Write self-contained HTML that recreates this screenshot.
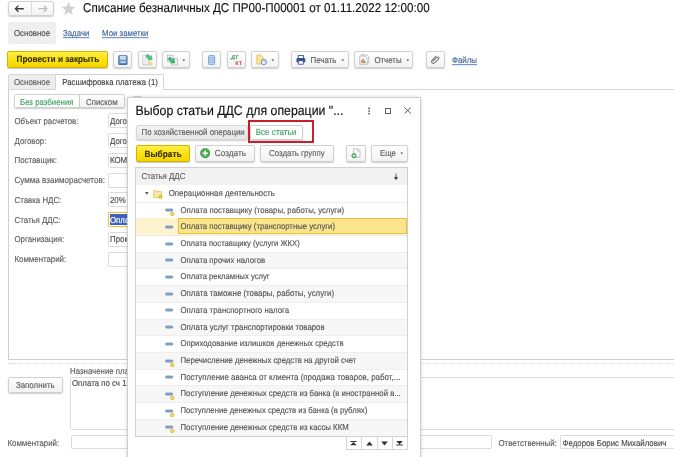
<!DOCTYPE html>
<html lang="ru">
<head>
<meta charset="utf-8">
<title>Списание безналичных ДС</title>
<style>
html,body{margin:0;padding:0;}
body{text-rendering:geometricPrecision;-webkit-font-smoothing:antialiased;width:674px;height:457px;overflow:hidden;background:#fff;position:relative;font-family:"Liberation Sans",Arial,sans-serif;font-size:7.86px;color:#606060;}
.a{position:absolute;white-space:nowrap;box-sizing:border-box;}
.t{margin-top:0.7px;position:absolute;white-space:nowrap;line-height:10px;height:10px;transform:scaleY(1.1);transform-origin:0 72%;-webkit-text-stroke:0.14px currentColor;}
.btn{position:absolute;box-sizing:border-box;border:1px solid #d0d0d0;border-radius:2px;background:linear-gradient(#ffffff,#f2f2f2);box-shadow:0 1px 1.5px rgba(0,0,0,.2);}
.ybtn{position:absolute;box-sizing:border-box;border:1px solid #d3b300;border-radius:2px;background:linear-gradient(#fff045,#fbe317 45%,#f5d500);box-shadow:0 1px 1px rgba(0,0,0,.22);font-weight:bold;color:#3a3200;}
.fld{position:absolute;box-sizing:border-box;border:1px solid #dcdcdc;border-radius:1.5px;background:#fff;}
.lnk{color:#41669f;text-decoration:underline;text-decoration-thickness:0.6px;text-underline-offset:1.1px;text-decoration-skip-ink:none;text-decoration-color:#6d8fc4;}
.row{position:absolute;left:135px;width:273px;height:16.75px;box-sizing:border-box;border-top:1px solid #eeeeee;}
.row.g{background:#f7f7f7;}
.row.sel{background:#fdf3cc;border-top:1px solid #fdf3cc;}
.rt{position:absolute;left:45.5px;top:3.0px;line-height:10px;white-space:nowrap;transform:scaleY(1.1);transform-origin:0 72%;-webkit-text-stroke:0.14px currentColor;color:#555;}
.ic{position:absolute;left:30px;top:4.6px;}
</style>
</head>
<body>
<div id="w" style="position:absolute;left:0;top:0;width:674px;height:457px;overflow:hidden;will-change:transform;">
<!-- header nav -->
<div class="btn" style="left:8px;top:1px;width:46px;height:15px;border-radius:3px;"></div>
<div class="a" style="left:31px;top:2px;width:1px;height:13px;background:#dcdcdc;"></div>
<svg class="a" style="left:14px;top:4px" width="12" height="9" viewBox="0 0 12 9"><path d="M4.4 1.6 L1.4 4.7 L4.4 7.8 M1.6 4.7 H9.8" fill="none" stroke="#3c3c3c" stroke-width="1.35"/></svg>
<svg class="a" style="left:36.5px;top:4px" width="12" height="9" viewBox="0 0 12 9"><path d="M6.9 1.6 L9.9 4.7 L6.9 7.8 M9.7 4.7 H1.6" fill="none" stroke="#bdbdbd" stroke-width="1.3"/></svg>
<svg class="a" style="left:61px;top:1px" width="15" height="15" viewBox="0 0 15 15"><path d="M7.5 0.8 L9.4 5.6 L14.4 5.9 L10.5 9.1 L11.8 14 L7.5 11.2 L3.2 14 L4.5 9.1 L0.6 5.9 L5.6 5.6 Z" fill="#d0d0d0"/></svg>
<div class="t" style="left:83px;top:1px;font-size:11.62px;line-height:14px;height:14px;color:#111;transform:scaleY(1.1);">Списание безналичных ДС ПР00-П00001 от 01.11.2022 12:00:00</div>

<!-- nav tabs -->
<div class="a" style="left:8px;top:22px;width:47.8px;height:22px;background:#efefef;border-radius:2px;"></div>
<div class="t" style="left:14px;top:28px;color:#505050;">Основное</div>
<div class="t lnk" style="left:63px;top:28px;">Задачи</div>
<div class="t lnk" style="left:102px;top:28px;">Мои заметки</div>

<!-- command bar -->
<div class="ybtn" style="left:7.3px;top:50.8px;width:100.3px;height:17.6px;"></div>
<div class="t" style="left:16.5px;top:54.1px;font-weight:bold;color:#3a3200;font-size:8.25px;">Провести и закрыть</div>
<div class="btn" style="left:113px;top:51px;width:19px;height:17px;"></div>
<div class="btn" style="left:138px;top:51px;width:19px;height:17px;"></div>
<div class="btn" style="left:162px;top:51px;width:28px;height:17px;"></div>
<div class="btn" style="left:202px;top:51px;width:19px;height:17px;"></div>
<div class="btn" style="left:227px;top:51px;width:19px;height:17px;"></div>
<div class="btn" style="left:251px;top:51px;width:28px;height:17px;"></div>
<div class="btn" style="left:291px;top:51px;width:58px;height:17px;"></div>
<div class="t" style="left:310.6px;top:55.1px;">Печать</div>
<div class="btn" style="left:354px;top:51px;width:59px;height:17px;"></div>
<div class="t" style="left:374.4px;top:55.1px;">Отчеты</div>
<div class="btn" style="left:426px;top:51px;width:19px;height:17px;"></div>
<div class="t lnk" style="left:452px;top:55.1px;">Файлы</div>


<!-- toolbar icons -->
<svg class="a" style="left:117.6px;top:54.5px" width="10" height="10.4" viewBox="0 0 10 10.4"><rect x="0.6" y="0.6" width="8.6" height="9" rx="0.7" fill="#6f97c9" stroke="#4f79ae" stroke-width="0.8"/><rect x="2" y="1.1" width="5.8" height="3.5" fill="#dbe6f4"/><path d="M2.4 2.3 H7.4 M2.4 3.5 H7.4" stroke="#aebfd6" stroke-width="0.45"/><rect x="2.4" y="6.4" width="5" height="2" fill="#cfdcec"/><rect x="1" y="8.5" width="7.8" height="1.1" fill="#34578a"/></svg>
<svg class="a" style="left:141.5px;top:53.5px" width="12" height="12" viewBox="0 0 12 12"><path d="M0.9 1.2 H5.2 L7 3 V10.8 H0.9 Z" fill="#fbfbfb" stroke="#b7bcc4" stroke-width="0.7"/><path d="M2 4.4 H4.6 M2 6 H5.4 M2 7.6 H5.4 M2 9.2 H4.6" stroke="#cfd3d9" stroke-width="0.6"/><g transform="translate(4.6,1.5) rotate(36)"><path d="M0 -1.5 H3.6 V-2.7 L6.9 0 L3.6 2.7 V1.5 H0 Z" fill="#4cc687" stroke="#2fa565" stroke-width="0.5"/></g><ellipse cx="8.1" cy="8.9" rx="1.7" ry="0.8" fill="#faeaa0" stroke="#dcbc4c" stroke-width="0.45"/><path d="M6.4 8.9 V10.4 A1.7 0.8 0 0 0 9.8 10.4 V8.9" fill="#f5de7a" stroke="#dcbc4c" stroke-width="0.45"/></svg>
<svg class="a" style="left:166px;top:53.5px" width="13" height="12" viewBox="0 0 13 12"><rect x="1.3" y="1.2" width="5.8" height="6.2" fill="#f4f5f7" stroke="#a7adb6" stroke-width="0.7"/><rect x="5.8" y="4.8" width="5.8" height="6.2" fill="#f4f5f7" stroke="#a7adb6" stroke-width="0.7"/><g transform="translate(3,4.1) rotate(40)"><path d="M0 -1.4 H4.2 V-2.7 L7.6 0 L4.2 2.7 V1.4 H0 Z" fill="#45bd78" stroke="#2c9a55" stroke-width="0.6"/></g></svg>
<svg class="a" style="left:182px;top:58.6px" width="4" height="3" viewBox="0 0 4 3"><path d="M0.4 0.5 H3.2 L1.8 2.3 Z" fill="#555"/></svg>
<svg class="a" style="left:208.4px;top:54.6px" width="7.4" height="10.4" viewBox="0 0 7.4 10.4"><rect x="0.5" y="0.5" width="6.2" height="9.2" rx="0.9" fill="#c3d8ef" stroke="#6d98c8" stroke-width="0.75"/><path d="M0.8 2.8 H6.4 M0.8 5.1 H6.4 M0.8 7.4 H6.4" stroke="#6d98c8" stroke-width="0.65"/></svg>
<svg class="a" style="left:229px;top:53px" width="16" height="13" viewBox="0 0 16 13"><text x="2" y="6.4" font-family="Liberation Sans, Arial, sans-serif" font-size="5.5" font-weight="bold" font-style="italic" fill="#2f9a48">ДТ</text><text x="6.2" y="11.6" font-family="Liberation Sans, Arial, sans-serif" font-size="5.5" font-weight="bold" fill="#d23a3a">КТ</text></svg>
<svg class="a" style="left:256px;top:53.5px" width="12" height="12" viewBox="0 0 12 12"><path d="M0.9 1 H5 L7 3 V10 H0.9 Z" fill="#f8e596" stroke="#dcbc58" stroke-width="0.7"/><circle cx="7.9" cy="8" r="2.6" fill="#fff" stroke="#4d72b6" stroke-width="0.85"/><path d="M7.9 6.5 V8 H9.1" stroke="#4d72b6" stroke-width="0.6" fill="none"/></svg>
<svg class="a" style="left:270.7px;top:58.6px" width="4" height="3" viewBox="0 0 4 3"><path d="M0.4 0.5 H3.2 L1.8 2.3 Z" fill="#555"/></svg>
<svg class="a" style="left:296px;top:54.5px" width="10" height="10" viewBox="0 0 10 10"><rect x="2.2" y="0.6" width="5.2" height="3" fill="#fff" stroke="#31518a" stroke-width="0.9"/><rect x="0.5" y="3.2" width="8.8" height="4.2" rx="1" fill="#31518a"/><rect x="2.3" y="5.8" width="5" height="3.4" fill="#fff" stroke="#31518a" stroke-width="0.8"/></svg>
<svg class="a" style="left:341px;top:58.6px" width="4" height="3" viewBox="0 0 4 3"><path d="M0.4 0.5 H3.2 L1.8 2.3 Z" fill="#555"/></svg>
<svg class="a" style="left:358.5px;top:54px" width="11" height="11" viewBox="0 0 11 11"><path d="M2.6 0.7 H7.6 L9.8 2.9 V9 H2.6 Z" fill="#fafafa" stroke="#a4a9b0" stroke-width="0.7"/><path d="M0.8 2 H5.8 L8 4.2 V10.3 H0.8 Z" fill="#fdfdfd" stroke="#a4a9b0" stroke-width="0.7"/><rect x="1.8" y="6" width="1.3" height="3.2" fill="#e2a33a"/><rect x="3.4" y="4.8" width="1.3" height="4.4" fill="#d9534f"/><rect x="5" y="6.6" width="1.3" height="2.6" fill="#4da85a"/></svg>
<svg class="a" style="left:405.5px;top:58.6px" width="4" height="3" viewBox="0 0 4 3"><path d="M0.4 0.5 H3.2 L1.8 2.3 Z" fill="#555"/></svg>
<svg class="a" style="left:430.3px;top:55.3px" width="10.5" height="9.5" viewBox="0 0 12 11"><path d="M3.2 7.6 L7.6 3.2 A1.3 1.3 0 0 1 9.5 5.1 L5 9.6 A2.2 2.2 0 0 1 1.9 6.5 L6.6 1.8" transform="translate(0.3,-0.4)" fill="none" stroke="#767676" stroke-width="1.25" stroke-linecap="round"/></svg>

<!-- page tabs -->
<div class="a" style="left:7.7px;top:88.7px;width:680px;height:271px;border:1px solid #cfcfcf;border-top:1.5px solid #d6d6d6;"></div>
<div class="a" style="left:8px;top:74.3px;width:48px;height:15.5px;border:1px solid #d8d8d8;background:#ededed;border-radius:2px 0 0 0;"></div>
<div class="a" style="left:55px;top:74.3px;width:109px;height:16px;border:1px solid #d4d4d4;border-bottom:none;background:#fff;border-radius:0 2px 0 0;"></div>
<div class="t" style="left:14px;top:77px;">Основное</div>
<div class="t" style="left:62.2px;top:77px;color:#444;">Расшифровка платежа (1)</div>

<!-- toggle -->
<div class="btn" style="left:14px;top:94.2px;width:111px;height:14.3px;"></div>
<div class="a" style="left:15px;top:95.2px;width:65px;height:12.3px;background:#fff;border-right:1px solid #c9c9c9;"></div>
<div class="t" style="left:20px;top:97px;color:#45a168;">Без разбиения</div>
<div class="t" style="left:86px;top:97px;">Списком</div>
<div class="btn" style="left:132px;top:96px;width:10px;height:12px;"></div>

<!-- form labels -->
<div class="t" style="left:14.5px;top:116px;">Объект расчетов:</div>
<div class="t" style="left:14.5px;top:136px;">Договор:</div>
<div class="t" style="left:14.5px;top:155.5px;">Поставщик:</div>
<div class="t" style="left:14.5px;top:175.5px;font-size:8.07px;">Сумма взаиморасчетов:</div>
<div class="t" style="left:14.5px;top:195px;">Ставка НДС:</div>
<div class="t" style="left:14.5px;top:215px;">Статья ДДС:</div>
<div class="t" style="left:14.5px;top:234.5px;">Организация:</div>
<div class="t" style="left:14.5px;top:254.5px;">Комментарий:</div>
<div class="fld" style="left:107.5px;top:113px;width:30px;height:15px;"></div><div class="t" style="left:110px;top:116px;color:#4c4c4c;">Дого</div>
<div class="fld" style="left:107.5px;top:133px;width:30px;height:15px;"></div><div class="t" style="left:110px;top:136px;color:#4c4c4c;">Дого</div>
<div class="fld" style="left:107.5px;top:152.5px;width:30px;height:15px;"></div><div class="t" style="left:110px;top:155.5px;color:#4c4c4c;">КОМ</div>
<div class="fld" style="left:107.5px;top:172.5px;width:30px;height:15px;"></div>
<div class="fld" style="left:107.5px;top:192px;width:30px;height:15px;"></div><div class="t" style="left:110px;top:195px;color:#4c4c4c;">20%</div>
<div class="fld" style="left:107.5px;top:212px;width:30px;height:15px;border-color:#e3c448;box-shadow:0 0 1.5px #ecd478;"></div><div class="a" style="left:109.5px;top:214px;width:20px;height:11px;background:#3e62b8;"></div><div class="t" style="left:110px;top:215px;color:#fff;">Опла</div>
<div class="fld" style="left:107.5px;top:231.5px;width:30px;height:15px;"></div><div class="t" style="left:110px;top:234.5px;color:#4c4c4c;">Пром</div>
<div class="fld" style="left:107.5px;top:251.5px;width:30px;height:15px;"></div>

<!-- bottom area -->
<div class="a" style="left:8px;top:363px;width:680px;height:0;border-top:1px dotted #d6d6d6;"></div>
<div class="t" style="left:70px;top:366px;">Назначение платежа:</div>
<div class="btn" style="left:7.7px;top:376.9px;width:55.5px;height:16px;"></div>
<div class="t" style="left:16px;top:380px;">Заполнить</div>
<div class="fld" style="left:70px;top:376.5px;width:620px;height:53px;"></div>
<div class="t" style="left:72px;top:378.5px;color:#4c4c4c;">Оплата по сч 1</div>
<div class="t" style="left:7.5px;top:438px;">Комментарий:</div>
<div class="fld" style="left:71px;top:435px;width:421px;height:14px;"></div>
<div class="t" style="left:498.5px;top:438px;">Ответственный:</div>
<div class="fld" style="left:559.5px;top:435px;width:130px;height:14px;"></div>
<div class="t" style="left:562.5px;top:438px;color:#4c4c4c;">Федоров Борис Михайлович</div>

<!-- dialog -->
<div class="a" id="dlg" style="left:127px;top:96.8px;width:293.5px;height:380px;background:#fff;border:1px solid #cdcdcd;box-shadow:0 0 4px rgba(0,0,0,.15);"></div>
<div class="t" style="left:135.5px;top:103.5px;font-size:12.3px;line-height:15px;height:15px;color:#111;transform:scaleY(1.1);">Выбор статьи ДДС для операции "...</div>
<svg class="a" style="left:366px;top:106px" width="6" height="10" viewBox="0 0 6 10"><circle cx="3.1" cy="2.4" r="0.85" fill="#4a4a4a"/><circle cx="3.1" cy="5" r="0.85" fill="#4a4a4a"/><circle cx="3.1" cy="7.6" r="0.85" fill="#4a4a4a"/></svg>
<div class="a" style="left:385.3px;top:107.9px;width:6.2px;height:6.2px;border:0.9px solid #5a5a5a;border-radius:0.6px;"></div>
<svg class="a" style="left:404px;top:107.2px" width="7.4" height="7" viewBox="0 0 7.4 7"><path d="M0.6 0.6 L6.8 6.4 M6.8 0.6 L0.6 6.4" stroke="#4a4a4a" stroke-width="0.95" fill="none"/></svg>

<div class="btn" style="left:135.5px;top:125px;width:112px;height:14.5px;background:linear-gradient(#f3f3f3,#e6e6e6);border-color:#d6d6d6;"></div>
<div class="t" style="left:141.5px;top:127px;">По хозяйственной операции</div>
<div class="btn" style="left:249.5px;top:125px;width:53.4px;height:14.5px;background:#fff;"></div>
<div class="t" style="left:255.7px;top:127px;color:#45a168;font-size:8.08px;">Все статьи</div>
<div class="a" style="left:248px;top:119.6px;width:66.2px;height:23.1px;border:2px solid #cc1d2d;"></div>

<div class="ybtn" style="left:135.5px;top:145px;width:54.5px;height:16.5px;"></div>
<div class="t" style="left:144.5px;top:148.5px;font-weight:bold;color:#3a3200;font-size:8.3px;">Выбрать</div>
<div class="btn" style="left:195.3px;top:145px;width:59.5px;height:16.5px;"></div>
<div class="t" style="left:214.8px;top:148.7px;font-size:8.2px;">Создать</div>
<div class="btn" style="left:260.2px;top:145px;width:73.6px;height:16.5px;"></div>
<div class="t" style="left:269px;top:148.7px;">Создать группу</div>
<div class="btn" style="left:346.2px;top:145px;width:19.4px;height:16.5px;"></div>
<div class="btn" style="left:371.2px;top:145px;width:36.5px;height:16.5px;"></div>
<div class="t" style="left:380px;top:148.8px;">Еще</div>

<!-- table -->
<div class="a" style="left:135px;top:167px;width:273px;height:269.6px;background:#fff;"></div>
<div class="a" style="left:135px;top:167px;width:273px;height:18.4px;background:#f2f2f2;"></div>
<div class="t" style="left:141.5px;top:171.5px;">Статья ДДС</div>
<div class="row" style="top:185.3px;height:16.25px;border-top:none;"><svg class="a" style="left:9.8px;top:6.7px" width="4" height="3" viewBox="0 0 4 3"><path d="M0 0.3 H3.6 L1.8 2.6 Z" fill="#333"/></svg><svg class="a" style="left:18px;top:4.6px" width="10" height="9.1" viewBox="0 0 11 10"><path d="M0.5 1.5 Q0.5 0.6 1.3 0.6 H3.6 L4.4 1.6 H8.6 Q9.4 1.6 9.4 2.4 V7.6 Q9.4 8.4 8.6 8.4 H1.3 Q0.5 8.4 0.5 7.6 Z" fill="#f8e7a6" stroke="#e2bf55" stroke-width="0.9"/><circle cx="8.3" cy="7.6" r="1.7" fill="#f3cf55" stroke="#d9a520" stroke-width="0.8"/></svg><span class="rt" style="left:33.7px;top:3.5px;">Операционная деятельность</span></div>
<div class="row" style="top:201.52px;"><svg class="ic" width="10" height="9" viewBox="0 0 10 9"><rect x="0.7" y="2" width="7" height="2.1" rx="0.7" fill="#8eb2d4" stroke="#5079a5" stroke-width="0.65"/><circle cx="7.3" cy="7" r="1.7" fill="#f8dc70" stroke="#dba927" stroke-width="0.8"/></svg><span class="rt" style="font-size:7.80px">Оплата поставщику (товары, работы, услуги)</span></div>
<div class="row sel" style="top:218.24px;"><div class="a" style="left:43px;top:-1px;width:229px;height:16.2px;background:#fbe48b;border:1px solid #e6c23c;"></div><svg class="ic" width="10" height="9" viewBox="0 0 10 9"><rect x="0.7" y="2" width="7" height="2.1" rx="0.7" fill="#8eb2d4" stroke="#5079a5" stroke-width="0.65"/></svg><span class="rt" style="font-size:7.75px">Оплата поставщику (транспортные услуги)</span></div>
<div class="row" style="top:234.96px;"><svg class="ic" width="10" height="9" viewBox="0 0 10 9"><rect x="0.7" y="2" width="7" height="2.1" rx="0.7" fill="#8eb2d4" stroke="#5079a5" stroke-width="0.65"/></svg><span class="rt" style="font-size:7.66px">Оплата поставщику (услуги ЖКХ)</span></div>
<div class="row g" style="top:251.68px;"><svg class="ic" width="10" height="9" viewBox="0 0 10 9"><rect x="0.7" y="2" width="7" height="2.1" rx="0.7" fill="#8eb2d4" stroke="#5079a5" stroke-width="0.65"/></svg><span class="rt" style="font-size:7.78px">Оплата прочих налогов</span></div>
<div class="row" style="top:268.40px;"><svg class="ic" width="10" height="9" viewBox="0 0 10 9"><rect x="0.7" y="2" width="7" height="2.1" rx="0.7" fill="#8eb2d4" stroke="#5079a5" stroke-width="0.65"/></svg><span class="rt" style="font-size:7.69px">Оплата рекламных услуг</span></div>
<div class="row g" style="top:285.12px;"><svg class="ic" width="10" height="9" viewBox="0 0 10 9"><rect x="0.7" y="2" width="7" height="2.1" rx="0.7" fill="#8eb2d4" stroke="#5079a5" stroke-width="0.65"/></svg><span class="rt">Оплата таможне (товары, работы, услуги)</span></div>
<div class="row" style="top:301.84px;"><svg class="ic" width="10" height="9" viewBox="0 0 10 9"><rect x="0.7" y="2" width="7" height="2.1" rx="0.7" fill="#8eb2d4" stroke="#5079a5" stroke-width="0.65"/></svg><span class="rt" style="font-size:7.84px">Оплата транспортного налога</span></div>
<div class="row g" style="top:318.56px;"><svg class="ic" width="10" height="9" viewBox="0 0 10 9"><rect x="0.7" y="2" width="7" height="2.1" rx="0.7" fill="#8eb2d4" stroke="#5079a5" stroke-width="0.65"/></svg><span class="rt">Оплата услуг транспортировки товаров</span></div>
<div class="row" style="top:335.28px;"><svg class="ic" width="10" height="9" viewBox="0 0 10 9"><rect x="0.7" y="2" width="7" height="2.1" rx="0.7" fill="#8eb2d4" stroke="#5079a5" stroke-width="0.65"/></svg><span class="rt" style="font-size:7.77px">Оприходование излишков денежных средств</span></div>
<div class="row g" style="top:352.00px;"><svg class="ic" width="10" height="9" viewBox="0 0 10 9"><rect x="0.7" y="2" width="7" height="2.1" rx="0.7" fill="#8eb2d4" stroke="#5079a5" stroke-width="0.65"/><circle cx="7.3" cy="7" r="1.7" fill="#f8dc70" stroke="#dba927" stroke-width="0.8"/></svg><span class="rt" style="font-size:7.78px">Перечисление денежных средств на другой счет</span></div>
<div class="row" style="top:368.72px;"><svg class="ic" width="10" height="9" viewBox="0 0 10 9"><rect x="0.7" y="2" width="7" height="2.1" rx="0.7" fill="#8eb2d4" stroke="#5079a5" stroke-width="0.65"/></svg><span class="rt" style="font-size:7.94px">Поступление аванса от клиента (продажа товаров, работ,...</span></div>
<div class="row g" style="top:385.44px;"><svg class="ic" width="10" height="9" viewBox="0 0 10 9"><rect x="0.7" y="2" width="7" height="2.1" rx="0.7" fill="#8eb2d4" stroke="#5079a5" stroke-width="0.65"/><circle cx="7.3" cy="7" r="1.7" fill="#f8dc70" stroke="#dba927" stroke-width="0.8"/></svg><span class="rt" style="font-size:7.80px">Поступление денежных средств из банка (в иностранной в...</span></div>
<div class="row" style="top:402.16px;"><svg class="ic" width="10" height="9" viewBox="0 0 10 9"><rect x="0.7" y="2" width="7" height="2.1" rx="0.7" fill="#8eb2d4" stroke="#5079a5" stroke-width="0.65"/><circle cx="7.3" cy="7" r="1.7" fill="#f8dc70" stroke="#dba927" stroke-width="0.8"/></svg><span class="rt" style="font-size:7.73px">Поступление денежных средств из банка (в рублях)</span></div>
<div class="row g" style="top:418.88px;"><svg class="ic" width="10" height="9" viewBox="0 0 10 9"><rect x="0.7" y="2" width="7" height="2.1" rx="0.7" fill="#8eb2d4" stroke="#5079a5" stroke-width="0.65"/><circle cx="7.3" cy="7" r="1.7" fill="#f8dc70" stroke="#dba927" stroke-width="0.8"/></svg><span class="rt" style="font-size:7.80px">Поступление денежных средств из кассы ККМ</span></div>

<div class="a" style="left:135px;top:167px;width:273px;height:269.6px;border:1px solid #d0d0d0;"></div>
<!-- dialog icons -->
<svg class="a" style="left:200px;top:148.2px" width="10.4" height="10.4" viewBox="0 0 10.4 10.4"><circle cx="5.2" cy="5.2" r="4.7" fill="#4daa57" stroke="#3a9446" stroke-width="0.7"/><path d="M5.2 2.6 V7.8 M2.6 5.2 H7.8" stroke="#fff" stroke-width="1.5"/></svg>
<svg class="a" style="left:350.5px;top:148.3px" width="10" height="11" viewBox="0 0 10 11"><path d="M2.6 0.7 H6.6 L9 3.1 V9.4 H2.6 Z" fill="#fbfbfb" stroke="#a9aeb5" stroke-width="0.7"/><path d="M6.6 0.7 V3.1 H9" fill="none" stroke="#a9aeb5" stroke-width="0.6"/><circle cx="3" cy="7.7" r="2.2" fill="#57b35f" stroke="#3a9446" stroke-width="0.7"/><path d="M3 6.4 V9 M1.7 7.7 H4.3" stroke="#fff" stroke-width="0.8"/></svg>
<svg class="a" style="left:399.8px;top:152.4px" width="4" height="3" viewBox="0 0 4 3"><path d="M0.4 0.5 H3.2 L1.8 2.3 Z" fill="#555"/></svg>
<svg class="a" style="left:392.6px;top:172.8px" width="6" height="8" viewBox="0 0 6 8"><path d="M3 0.6 V6 M1.5 4.6 L3 6.5 L4.5 4.6 Z" fill="#333" stroke="#333" stroke-width="0.8"/></svg>
<!-- scroll buttons -->
<div class="a" style="left:346px;top:435.5px;width:61.5px;height:14px;border:1px solid #d2d2d2;background:#fff;"></div>
<div class="a" style="left:360.9px;top:436px;width:1px;height:13px;background:#d8d8d8;"></div>
<div class="a" style="left:376.5px;top:436px;width:1px;height:13px;background:#d8d8d8;"></div>
<div class="a" style="left:392.1px;top:436px;width:1px;height:13px;background:#d8d8d8;"></div>
<svg class="a" style="left:350.3px;top:441.2px" width="7" height="4.4" viewBox="0 0 7 4.4"><path d="M0.3 0 H6.7 V0.9 H0.3 Z M3.5 1 L6.8 4.3 H0.2 Z" fill="#333"/></svg>
<svg class="a" style="left:365.8px;top:441.3px" width="7" height="5" viewBox="0 0 7 5"><path d="M3.5 0.5 L6.8 4.4 H0.2 Z" fill="#333"/></svg>
<svg class="a" style="left:381.1px;top:441.3px" width="7" height="5" viewBox="0 0 7 5"><path d="M3.5 4.4 L6.8 0.5 H0.2 Z" fill="#333"/></svg>
<svg class="a" style="left:396.2px;top:441.4px" width="7" height="4.4" viewBox="0 0 7 4.4"><path d="M0.3 3.5 H6.7 V4.4 H0.3 Z M3.5 3.4 L6.8 0.1 H0.2 Z" fill="#333"/></svg>
</div>
</body>
</html>
